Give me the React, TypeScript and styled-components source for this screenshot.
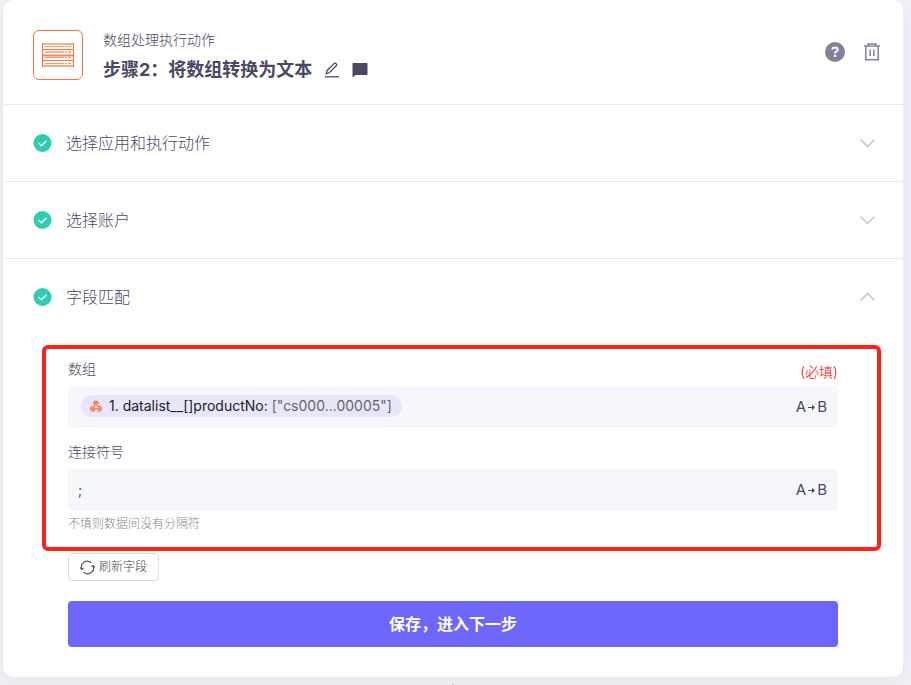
import React, { useState } from "react";
import styled, { createGlobalStyle } from "styled-components";

const ink = "#4b4863";
const orange = "#fd7337";

const GlobalStyle = createGlobalStyle`
  *, *::before, *::after { box-sizing: border-box; }
  body {
    margin: 0;
    background: #f1f2f7;
    color: ${ink};
    font-family: Inter, "Noto Sans CJK SC", sans-serif;
    font-size: 14px;
    line-height: 20px;
  }
  button, input { font: inherit; color: inherit; }
  button { padding: 0; border: 0; background: none; cursor: pointer; }
  h1, h2, p { margin: 0; }
  svg { display: block; flex: none; }
`;

const Page = styled.main`
  padding: 0 8px 0 3px;
`;

const Card = styled.section`
  padding-bottom: 30px;
  border-radius: 10px;
  background: #fff;
  box-shadow: 0 4px 20px rgba(60, 60, 80, 0.08);
`;

const Header = styled.header`
  display: flex;
  align-items: center;
  gap: 20px;
  height: 105px;
  padding: 6px 22px 0 30px;
  border-bottom: 1px solid #eaeaee;
`;

const AppBadge = styled.div`
  display: flex;
  align-items: center;
  justify-content: center;
  width: 50px;
  height: 50px;
  border: 1px solid ${orange};
  border-radius: 6px;
`;

const Titles = styled.div`
  flex: 1;
  padding-top: 4px;
`;

const Subtitle = styled.p`
  font-size: 14px;
  font-weight: 300;
  line-height: 20px;
`;

const TitleRow = styled.div`
  display: flex;
  align-items: center;
  gap: 12px;
  padding-top: 6px;
`;

const Title = styled.h1`
  font-size: 18px;
  line-height: 28px;
  font-weight: 700;
`;

const IconButton = styled.button`
  display: flex;
  color: ${ink};
`;

const HeaderActions = styled.div`
  display: flex;
  gap: 18px;
  padding-bottom: 6px;
`;

const StepHeading = styled.h2<{ $open?: boolean }>`
  font-size: 16px;
  font-weight: 300;
  border-bottom: ${(p) => (p.$open ? "0" : "1px solid #eaeaee")};
`;

const StepToggle = styled.button`
  display: flex;
  align-items: center;
  gap: 14px;
  width: 100%;
  height: 76px;
  padding: 0 28px 0 30px;
  text-align: left;
`;

const StepName = styled.span`
  flex: 1;
  line-height: 24px;
`;

const Highlight = styled.div`
  margin: 10px 22px 0 39px;
  padding: 9px 39px 14px 22px;
  border: 4px solid #ff2116;
  border-radius: 6px;
`;

const Field = styled.div`
  & + & { margin-top: 14px; }
`;

const LabelRow = styled.div`
  display: flex;
  justify-content: space-between;
  align-items: flex-start;
`;

const Label = styled.label<{ $tall?: boolean }>`
  line-height: 20px;
  font-weight: 300;
  padding: ${(p) => (p.$tall ? "1px 0 7px" : "0 0 7px")};
`;

const Required = styled.span`
  padding-top: 4px;
  color: #f60c0c;
  font-weight: 300;
  line-height: 20px;
`;

const Box = styled.div`
  display: flex;
  align-items: center;
  height: 42px;
  padding: 0 11px 0 10px;
  border-radius: 5px;
  background: #f6f7fb;
`;

const TextInput = styled.input`
  flex: 1;
  min-width: 0;
  height: 42px;
  padding: 0 0 2px;
  border: 0;
  outline: 0;
  background: transparent;
  color: #555;
`;

const Chips = styled.div`
  flex: 1;
  display: flex;
  padding: 0 3px 2px;
`;

const Chip = styled.span`
  display: flex;
  align-items: center;
  gap: 7px;
  height: 22px;
  padding: 0 10px 0 9px;
  border-radius: 11px;
  background: #e8e6fa;
  color: #222;
  white-space: pre;
`;

const ChipValue = styled.span`
  color: #666;
`;

const MapButton = styled.button`
  display: flex;
  align-items: center;
  gap: 2px;
  font-size: 15px;
`;

const Hint = styled.p`
  padding-top: 4px;
  color: #888;
  font-size: 12px;
  font-weight: 300;
  line-height: 18px;
`;

const Actions = styled.div`
  display: flex;
  flex-direction: column;
  align-items: flex-start;
  gap: 20px;
  padding: 2px 65px 0;
`;

const Refresh = styled.button`
  display: flex;
  align-items: center;
  gap: 4px;
  height: 28px;
  padding: 0 11px;
  border: 1px solid #dedee2;
  border-radius: 4px;
  color: #444;
  font-size: 12px;
  font-weight: 300;
`;

const Save = styled.button`
  width: 100%;
  height: 46px;
  border-radius: 4px;
  background: #6e65fa;
  color: #fff;
  font-size: 16px;
  font-weight: 700;
`;

const Connector = styled.div`
  width: 2px;
  height: 1px;
  margin: 7px auto 0;
  background: #c6c7cf;
`;

const ServerIcon = () => (
  <svg width="32" height="24" viewBox="0 0 32 24" fill="none" stroke={orange}>
    <path d="M0 1H32M0 23H32" strokeWidth="2" opacity=".6" />
    <path d="M0 12.500H32" strokeWidth="2" opacity=".85" />
    <path d="M.5 0V24M31.500 0V24M0 6.500H32M0 17.500H32" />
    <path d="M3 3.500H22M23 3.500H25M26 3.500H29M3 14.500H22M23 14.500H25M26 14.500H29M3 20.500H22M23 20.500H25M26 20.500H29" opacity=".75" />
    <path d="M3 9H22M23 9H25M26 9H29" strokeWidth="2" opacity=".55" />
  </svg>
);

const PencilIcon = () => (
  <svg width="16" height="16" viewBox="0 0 16 16" fill="none" stroke="currentColor" strokeWidth="1.3">
    <path d="M2.300 11.700L3 8.700L10.100 1.600Q11 .8 11.900 1.600L12.300 2Q13.100 2.800 12.300 3.700L5.200 10.800Z" />
    <path d="M1 14.800H15" />
  </svg>
);

const NoteIcon = () => (
  <svg width="16" height="16" viewBox="0 0 16 16" fill="currentColor">
    <path d="M1.500 1H14.500Q15.500 1 15.500 2V12Q15.500 13 14.500 13H3.500L.5 15.500V2Q.5 1 1.500 1Z" />
  </svg>
);

const HelpIcon = () => (
  <svg width="20" height="20" viewBox="0 0 20 20" fill="none">
    <circle cx="10" cy="10" r="10" fill="#858199" />
    <path d="M7.300 7.600Q7.500 5.400 10 5.400Q12.700 5.400 12.700 7.500Q12.700 8.700 11.400 9.400Q10 10.200 10 11.500" stroke="#fff" strokeWidth="2" />
    <rect x="9" y="12.800" width="2.100" height="2.100" fill="#fff" />
  </svg>
);

const TrashIcon = () => (
  <svg width="18" height="20" viewBox="0 0 18 20" fill="none" stroke="#858199" strokeWidth="1.500">
    <path d="M1 4H17M5 3.500V2H13V3.500M2.800 4V17.700H15.200V4M7.200 7.500V14M10.800 7.500V14" />
  </svg>
);

const CheckIcon = () => (
  <svg width="19" height="19" viewBox="0 0 19 19" fill="none">
    <circle cx="9.500" cy="9" r="9" fill="#2dcdae" />
    <path d="M5.500 9.100L8.300 11.800L13.500 6.700" stroke="#fff" strokeWidth="1.400" />
  </svg>
);

const Chevron = ({ up }: { up?: boolean }) => (
  <svg width="15" height="10" viewBox="0 0 15 10" fill="none" stroke="#b7c2d0" strokeWidth="1.300">
    <path d={up ? "M.5 8.500L7.500 1.500L14.500 8.500" : "M.5 1.500L7.500 8.500L14.500 1.500"} />
  </svg>
);

const WebhookIcon = () => (
  <svg width="12" height="12" viewBox="0 0 12 12" fill="none" stroke={orange} strokeWidth="1.100">
    <circle cx="6" cy="3.300" r="1" />
    <circle cx="2.800" cy="8.800" r="1" />
    <circle cx="9.200" cy="8.800" r="1" />
    <path d="M3.700 4.300A2.400 2.400 0 1 1 8.300 4M5.400 4.400L3.400 7.700M6.600 4.400L8.200 7M8.300 6.500A2.400 2.400 0 1 1 7.500 10.600M4 8.800H8M2.500 6.400A2.400 2.400 0 1 0 5.100 9.700" />
  </svg>
);

const ArrowIcon = () => (
  <svg width="7" height="7" viewBox="0 0 7 7" fill="currentColor">
    <path d="M0 3H4V.7L7 3.500L4 6.300V4H0Z" />
  </svg>
);

const RefreshIcon = () => (
  <svg width="15" height="15" viewBox="0 0 15 15" fill="none" stroke="#555" strokeWidth="1.200">
    <path d="M1.700 9.400A6 6 0 0 1 11.400 2.900M3.600 12.100A6 6 0 0 0 13.300 5.600" />
    <path d="M.3 7.500L1.700 9.400L3.500 8M11.500 7L13.300 5.600L14.700 7.500" />
  </svg>
);

const MapTo = () => (
  <MapButton type="button" aria-label="A B">
    A<ArrowIcon />B
  </MapButton>
);

const Step = ({ name, open }: { name: string; open?: boolean }) => (
  <StepHeading $open={open}>
    <StepToggle type="button" aria-expanded={!!open}>
      <CheckIcon />
      <StepName>{name}</StepName>
      <Chevron up={open} />
    </StepToggle>
  </StepHeading>
);

export default function App() {
  const [separator, setSeparator] = useState(";");
  return (
    <Page>
      <GlobalStyle />
      <Card>
        <Header>
          <AppBadge><ServerIcon /></AppBadge>
          <Titles>
            <Subtitle>数组处理执行动作</Subtitle>
            <TitleRow>
              <Title>步骤2：将数组转换为文本</Title>
              <IconButton type="button" aria-label="编辑"><PencilIcon /></IconButton>
              <IconButton type="button" aria-label="备注"><NoteIcon /></IconButton>
            </TitleRow>
          </Titles>
          <HeaderActions>
            <IconButton type="button" aria-label="帮助"><HelpIcon /></IconButton>
            <IconButton type="button" aria-label="删除"><TrashIcon /></IconButton>
          </HeaderActions>
        </Header>
        <Step name="选择应用和执行动作" />
        <Step name="选择账户" />
        <Step name="字段匹配" open />
        <Highlight>
          <Field>
            <LabelRow>
              <Label as="span" id="array-label" $tall>数组</Label>
              <Required>(必填)</Required>
            </LabelRow>
            <Box>
              <Chips role="group" aria-labelledby="array-label">
                <Chip>
                  <WebhookIcon />
                  <span>1. datalist__[]productNo: <ChipValue>["cs000...00005"]</ChipValue></span>
                </Chip>
              </Chips>
              <MapTo />
            </Box>
          </Field>
          <Field>
            <LabelRow>
              <Label htmlFor="separator">连接符号</Label>
            </LabelRow>
            <Box>
              <TextInput id="separator" value={separator} onChange={(e) => setSeparator(e.target.value)} />
              <MapTo />
            </Box>
            <Hint>不填则数据间没有分隔符</Hint>
          </Field>
        </Highlight>
        <Actions>
          <Refresh type="button"><RefreshIcon />刷新字段</Refresh>
          <Save type="button">保存，进入下一步</Save>
        </Actions>
      </Card>
      <Connector />
    </Page>
  );
}
